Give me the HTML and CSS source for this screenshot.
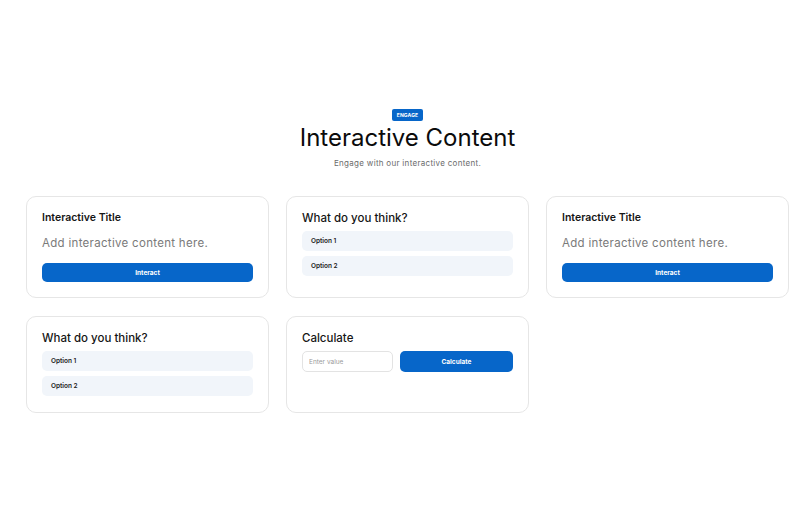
FILE: index.html
```html
<!DOCTYPE html>
<html lang="en">

<head>
    <meta charset="UTF-8">
    <meta name="viewport" content="width=device-width, initial-scale=1.0">
    <title>Interactive Content</title>
    <link rel="stylesheet" href="styles.css">
</head>

<body>
    <div class="page">
        <header class="intro">
            <span class="badge">ENGAGE</span>
            <h1>Interactive Content</h1>
            <p class="lead">Engage with our interactive content.</p>
        </header>

        <div class="grid">
            <div class="card">
                <h3 class="card-title">Interactive Title</h3>
                <p class="card-text">Add interactive content here.</p>
                <button class="btn">Interact</button>
            </div>

            <div class="card">
                <h3 class="poll-title">What do you think?</h3>
                <div class="option">Option 1</div>
                <div class="option">Option 2</div>
            </div>

            <div class="card">
                <h3 class="card-title">Interactive Title</h3>
                <p class="card-text">Add interactive content here.</p>
                <button class="btn">Interact</button>
            </div>

            <div class="card">
                <h3 class="poll-title">What do you think?</h3>
                <div class="option">Option 1</div>
                <div class="option">Option 2</div>
            </div>

            <div class="card">
                <h3 class="poll-title">Calculate</h3>
                <div class="calc-row">
                    <input type="text" class="calc-input" placeholder="Enter value">
                    <button class="btn calc-btn">Calculate</button>
                </div>
            </div>
        </div>
    </div>
</body>

</html>
```

FILE: styles.css
```css
body {
    margin: 0;
    background: #ffffff;
    font-family: 'Inter', 'Noto Sans', sans-serif;
    color: #111;
}

.page {
    width: 763px;
    margin-left: 26px;
    padding-top: 109px;
}

.intro {
    display: flex;
    flex-direction: column;
    align-items: center;
}

.badge {
    display: block;
    background: #0766c9;
    color: white;
    font-size: 5px;
    font-weight: 700;
    line-height: 12px;
    padding: 0 5px;
    border-radius: 2px;
    letter-spacing: 0.1px;
}

h1 {
    margin: 2px 0 0;
    font-size: 24px;
    font-weight: 400;
    line-height: 30px;
    letter-spacing: 0;
    color: #0b0b0b;
}

.lead {
    margin: 4px 0 0;
    font-size: 8px;
    line-height: 12px;
    letter-spacing: 0.3px;
    color: #6b6b6b;
}

.grid {
    display: grid;
    grid-template-columns: repeat(3, 1fr);
    column-gap: 17px;
    row-gap: 18px;
    margin-top: 27px;
}

.card {
    border: 1px solid #e6e6e6;
    border-radius: 10px;
    padding: 14px 15px 15px;
    background: white;
}

.card-title {
    margin: 0;
    font-size: 10.5px;
    font-weight: 600;
    line-height: 14px;
    color: #151515;
}

.card-text {
    margin: 10px 0 0;
    font-size: 11.5px;
    line-height: 16px;
    letter-spacing: 0.3px;
    color: #7a7a7a;
}

.btn {
    display: block;
    width: 100%;
    height: 19px;
    margin-top: 12px;
    padding: 0;
    background: #0766c9;
    color: white;
    border: none;
    border-radius: 5px;
    font-family: inherit;
    font-size: 6.5px;
    font-weight: 700;
    cursor: pointer;
}

.poll-title {
    margin: 0;
    font-size: 11.5px;
    font-weight: 500;
    line-height: 14px;
    color: #151515;
}

.option {
    margin-top: 6px;
    height: 20px;
    line-height: 20px;
    padding: 0 9px;
    background: #f1f5fa;
    border-radius: 5px;
    font-size: 6.5px;
    font-weight: 600;
    color: #222;
}

.option + .option {
    margin-top: 5px;
}

.calc-row {
    display: flex;
    gap: 7px;
    margin-top: 6px;
    margin-bottom: 1px;
}

.calc-input {
    width: 91px;
    height: 21px;
    box-sizing: border-box;
    padding: 0 6px;
    border: 1px solid #e3e3e3;
    border-radius: 5px;
    font-family: inherit;
    font-size: 6.5px;
    outline: none;
}

.calc-input::placeholder {
    color: #9a9a9a;
}

.calc-btn {
    flex: 1;
    height: 21px;
    margin-top: 0;
}

.card:nth-child(4) {
    padding-bottom: 16px;
}
```
